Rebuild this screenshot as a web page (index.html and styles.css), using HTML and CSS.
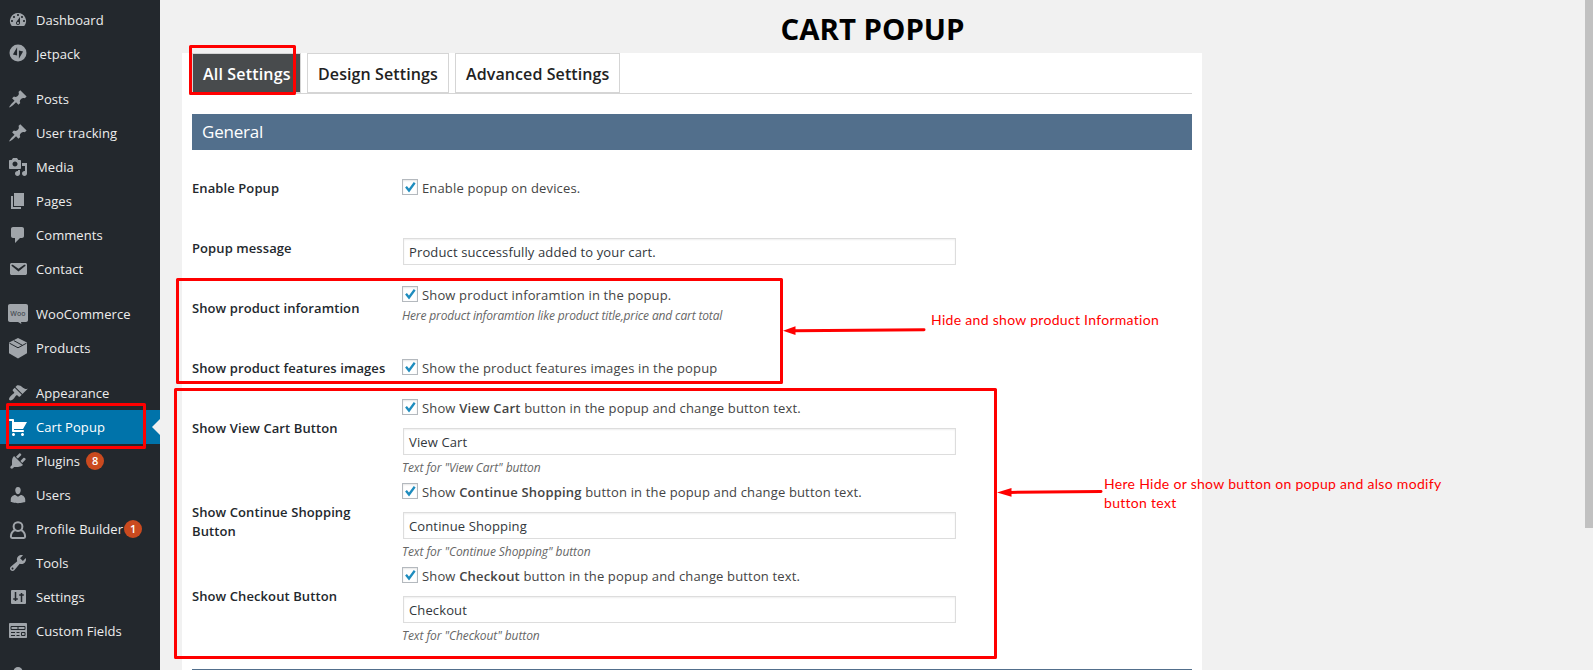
FILE: index.html
```html
<!DOCTYPE html>
<html lang="en">
<head>
<meta charset="utf-8">
<title>Cart Popup</title>
<link rel="stylesheet" href="styles.css">
</head>
<body>
<nav class="menu">
  <a class="item"><svg class="ico" viewBox="0 0 20 20"><path fill-rule="evenodd" d="M3.76 16h12.48A7.998 7.998 0 0 0 10 3a7.998 7.998 0 0 0-6.24 13zM10 4c.55 0 1 .45 1 1s-.45 1-1 1-1-.45-1-1 .45-1 1-1zM6 6c.55 0 1 .45 1 1s-.45 1-1 1-1-.45-1-1 .45-1 1-1zm8 0c.55 0 1 .45 1 1s-.45 1-1 1-1-.45-1-1 .45-1 1-1zm-5.37 5.55L12 7v6c0 1.1-.9 2-2 2s-2-.9-2-2c0-.57.24-1.08.63-1.45zM4 10c.55 0 1 .45 1 1s-.45 1-1 1-1-.45-1-1 .45-1 1-1zm12 0c.55 0 1 .45 1 1s-.45 1-1 1-1-.45-1-1 .45-1 1-1zm-5 3c0-.55-.45-1-1-1s-1 .45-1 1 .45 1 1 1 1-.45 1-1z"/></svg><span>Dashboard</span></a>
  <a class="item"><svg class="ico" viewBox="0 0 20 20"><circle cx="10" cy="9" r="8.5"/><path class="cut" d="M9.1 3.3v8.3L4.9 10.6zM10.9 14.7V6.4l4.2 1z"/></svg><span>Jetpack</span></a>
  <a class="item gap"><svg class="ico" viewBox="0 0 20 20"><path d="M10.44 3.02l1.82-1.82 6.36 6.35-1.83 1.82c-1.05-.68-2.48-.57-3.41.36l-.75.75c-.92.93-1.04 2.35-.35 3.41l-1.83 1.82-2.41-2.41-2.8 2.79c-.42.42-3.38 2.71-3.8 2.29s1.86-3.39 2.28-3.81l2.79-2.79L4.1 9.36l1.83-1.82c1.05.69 2.48.57 3.4-.36l.75-.75c.93-.92 1.05-2.35.36-3.41z"/></svg><span>Posts</span></a>
  <a class="item"><svg class="ico" viewBox="0 0 20 20"><path d="M10.44 3.02l1.82-1.82 6.36 6.35-1.83 1.82c-1.05-.68-2.48-.57-3.41.36l-.75.75c-.92.93-1.04 2.35-.35 3.41l-1.83 1.82-2.41-2.41-2.8 2.79c-.42.42-3.38 2.71-3.8 2.29s1.86-3.39 2.28-3.81l2.79-2.79L4.1 9.36l1.83-1.82c1.05.69 2.48.57 3.4-.36l.75-.75c.93-.92 1.05-2.35.36-3.41z"/></svg><span>User tracking</span></a>
  <a class="item"><svg class="ico" viewBox="0 0 20 20"><path fill-rule="evenodd" d="M13 11V4c0-.55-.45-1-1-1h-1.67L9 1H5L3.67 3H2c-.55 0-1 .45-1 1v7c0 .55.45 1 1 1h10c.55 0 1-.45 1-1zM7 4.5c1.38 0 2.5 1.12 2.5 2.5S8.38 9.5 7 9.5 4.5 8.38 4.5 7 5.62 4.5 7 4.5zM14 6h5v10.5c0 1.38-1.12 2.5-2.5 2.5S14 17.88 14 16.5s1.12-2.5 2.5-2.5c.17 0 .34.02.5.05V9h-3V6zm-4 8.05V13h2v3.5c0 1.38-1.12 2.5-2.5 2.5S7 17.88 7 16.5 8.12 14 9.5 14c.17 0 .34.02.5.05z"/></svg><span>Media</span></a>
  <a class="item"><svg class="ico" viewBox="0 0 20 20"><path d="M6 15V2h10v13H6zm-1 1h8v2H3V5h2v11z"/></svg><span>Pages</span></a>
  <a class="item"><svg class="ico" viewBox="0 0 20 20"><path d="M5 2h9c1.1 0 2 .9 2 2v7c0 1.1-.9 2-2 2h-2l-5 5v-5H5c-1.1 0-2-.9-2-2V4c0-1.1.9-2 2-2z"/></svg><span>Comments</span></a>
  <a class="item"><svg class="ico" viewBox="0 0 20 20"><path fill-rule="evenodd" d="M3.87 4h13.25C18.37 4 19 4.59 19 5.79v8.42c0 1.19-.63 1.79-1.88 1.79H3.87c-1.25 0-1.88-.6-1.88-1.79V5.79c0-1.2.63-1.79 1.88-1.79zm6.62 8.6l6.74-5.53c.24-.2.43-.66.13-1.07-.29-.41-.82-.42-1.17-.17l-5.7 3.86L4.8 5.83c-.35-.25-.88-.24-1.17.17-.3.41-.11.87.13 1.07z"/></svg><span>Contact</span></a>
  <a class="item gap"><svg class="ico" viewBox="0 0 20 20"><path d="M2 0h16c1.2 0 2 .8 2 2v14c0 1.2-.8 2-2 2h-5l.4 2-3.4-2H2c-1.2 0-2-.8-2-2V2C0 .8.8 0 2 0z"/><text class="woo" x="10" y="11.5">Woo</text></svg><span>WooCommerce</span></a>
  <a class="item"><svg class="ico" viewBox="0 0 20 20"><path d="M10 0l9 4.5v10.8L10 20.500l-9-5.200V4.500z"/><path class="line" d="M1.500 5.200L10 9.800l8.500-4.600M5.800 2.600l8.600 4.700"/></svg><span>Products</span></a>
  <a class="item gap"><svg class="ico" viewBox="0 0 20 20"><path d="M14.48 11.06L7.41 3.99l1.5-1.5c.5-.56 2.3-.47 3.51.32 1.21.8 1.43 1.28 2.91 2.1 1.18.64 2.45 1.26 4.45.85zm-.71.71L6.7 4.7 4.93 6.47c-.39.39-.39 1.02 0 1.41l1.06 1.06c.39.39.39 1.03 0 1.42-.6.6-1.43 1.11-2.21 1.69-.35.26-.7.53-1.01.84C1.43 14.23.4 16.08 1.4 17.07c.99 1 2.84-.03 4.18-1.36.31-.31.58-.66.85-1.02.57-.78 1.08-1.61 1.69-2.21.39-.39 1.02-.39 1.41 0l1.06 1.06c.39.39 1.02.39 1.41 0z"/></svg><span>Appearance</span></a>
  <a class="item current"><svg class="ico" viewBox="0 0 20 20"><path d="M6 13h9c.55 0 1 .45 1 1s-.45 1-1 1H5c-.55 0-1-.45-1-1V4H2c-.55 0-1-.45-1-1s.45-1 1-1h3c.55 0 1 .45 1 1v2h13l-4 7H6v1zm-.5 3c.83 0 1.5.67 1.5 1.5S6.33 19 5.5 19 4 18.33 4 17.5 4.67 16 5.5 16zm9 0c.83 0 1.5.67 1.5 1.5s-.67 1.5-1.5 1.5-1.5-.67-1.5-1.5.67-1.5 1.5-1.5z"/></svg><span>Cart Popup</span></a>
  <a class="item"><svg class="ico" viewBox="0 0 20 20"><path d="M13.11 4.36L9.87 7.6 8 5.73l3.24-3.24c.35-.34 1.05-.2 1.56.32.52.51.66 1.21.31 1.55zm-8 1.77l.91-1.12 9.01 9.01-1.19.84c-.71.71-2.63 1.16-3.82 1.16H6.14L4.9 17.26c-.59.59-1.54.59-2.12 0-.59-.58-.59-1.53 0-2.12l1.24-1.24v-3.88c0-1.13.4-3.19 1.09-3.89zm7.26 3.97l3.24-3.24c.34-.35 1.04-.21 1.55.31.52.51.66 1.21.31 1.55l-3.24 3.25z"/></svg><span>Plugins</span><b class="count">8</b></a>
  <a class="item"><svg class="ico" viewBox="0 0 20 20"><path d="M10 9.25c-2.27 0-2.73-3.44-2.73-3.44C7 4.02 7.82 2 9.97 2c2.16 0 2.98 2.02 2.71 3.81 0 0-.41 3.44-2.68 3.44zm0 2.57L12.72 10c2.39 0 4.52 2.33 4.52 4.53v2.49s-3.65 1.13-7.24 1.13c-3.65 0-7.24-1.13-7.24-1.13v-2.49c0-2.25 1.94-4.48 4.47-4.48z"/></svg><span>Users</span></a>
  <a class="item"><svg class="ico" viewBox="0 0 20 20"><path class="stroke" d="M10 3.200c2.700 0 4.400 1.900 4.400 4.300S12.700 12 10 12 5.600 9.900 5.600 7.500 7.300 3.200 10 3.200zM6.800 11.200C4 12.600 2.900 15 2.900 17.600c0 .9.300 1.300 1.200 1.300h11.800c.9 0 1.200-.4 1.200-1.300 0-2.600-1.100-5-3.900-6.400"/></svg><span>Profile Builder</span><b class="count tight">1</b></a>
  <a class="item"><svg class="ico" viewBox="0 0 20 20"><path fill-rule="evenodd" d="M16.68 9.77c-1.34 1.34-3.3 1.67-4.95.99l-5.41 6.52c-.99.99-2.59.99-3.58 0s-.99-2.59 0-3.57l6.52-5.42c-.68-1.65-.35-3.61.99-4.95 1.28-1.28 3.12-1.62 4.72-1.06l-2.89 2.89 2.82 2.82 2.86-2.87c.53 1.58.18 3.39-1.08 4.65zM3.81 16.21c.4.39 1.04.39 1.43 0 .4-.4.4-1.04 0-1.43-.39-.4-1.03-.4-1.43 0-.39.39-.39 1.03 0 1.43z"/></svg><span>Tools</span></a>
  <a class="item"><svg class="ico" viewBox="0 0 20 20"><rect x="3" y="3" width="15" height="14" rx="1"/><path class="line thick" d="M7.500 5v9M5.200 12h4.600M13.500 6v9M11.200 8h4.600"/></svg><span>Settings</span></a>
  <a class="item"><svg class="ico" viewBox="0 0 20 20"><rect x="1" y="2" width="18" height="15" rx=".8"/><path class="line" d="M3 5.500h14v3H3zM3 11.500h4M3 14.500h4M8.500 11.500h3M8.500 14.500h3M13.500 11.500H17v3h-3.500zM10 5.500v3"/></svg><span>Custom Fields</span></a>
  <a class="item gap"><svg class="ico" viewBox="0 0 20 20"><circle cx="10" cy="5.500" r="4.500"/></svg></a>
</nav>

<main class="main">
  <h1 class="title">CART POPUP</h1>
  <section class="panel">
    <div class="tabs">
      <a class="tab active">All Settings</a>
      <a class="tab design">Design Settings</a>
      <a class="tab advanced">Advanced Settings</a>
    </div>
    <h2 class="bar">General</h2>
    <div class="row mid">
      <label class="name">Enable Popup</label>
      <div class="field"><div class="check"><i class="box"><svg viewBox="0 0 14 14"><path d="M3 6.800l3 3.700L11.700 2.800"/></svg></i><span>Enable popup on devices.</span></div></div>
    </div>
    <div class="row text">
      <label class="name">Popup message</label>
      <div class="field"><div class="input">Product successfully added to your cart.</div></div>
    </div>
    <div class="row info">
      <label class="name">Show product inforamtion</label>
      <div class="field"><div class="check"><i class="box"><svg viewBox="0 0 14 14"><path d="M3 6.800l3 3.700L11.700 2.800"/></svg></i><span>Show product inforamtion in the popup.</span></div>
      <p class="desc">Here product inforamtion like product title,price and cart total</p></div>
    </div>
    <div class="row mid">
      <label class="name">Show product features images</label>
      <div class="field"><div class="check"><i class="box"><svg viewBox="0 0 14 14"><path d="M3 6.800l3 3.700L11.700 2.800"/></svg></i><span>Show the product features images in the popup</span></div></div>
    </div>
    <div class="row tall">
      <label class="name">Show View Cart Button</label>
      <div class="field"><div class="check"><i class="box"><svg viewBox="0 0 14 14"><path d="M3 6.800l3 3.700L11.700 2.800"/></svg></i><span>Show <b>View Cart</b> button in the popup and change button text.</span></div>
      <div class="input">View Cart</div><p class="desc">Text for "View Cart" button</p></div>
    </div>
    <div class="row tall">
      <label class="name">Show Continue Shopping Button</label>
      <div class="field"><div class="check"><i class="box"><svg viewBox="0 0 14 14"><path d="M3 6.800l3 3.700L11.700 2.800"/></svg></i><span>Show <b>Continue Shopping</b> button in the popup and change button text.</span></div>
      <div class="input">Continue Shopping</div><p class="desc">Text for "Continue Shopping" button</p></div>
    </div>
    <div class="row tall last">
      <label class="name">Show Checkout Button</label>
      <div class="field"><div class="check"><i class="box"><svg viewBox="0 0 14 14"><path d="M3 6.800l3 3.700L11.700 2.800"/></svg></i><span>Show <b>Checkout</b> button in the popup and change button text.</span></div>
      <div class="input">Checkout</div><p class="desc">Text for "Checkout" button</p></div>
    </div>
    <h2 class="bar"></h2>
  </section>
</main>

<i class="scroll"></i>
<i class="mark mark-tab"></i>
<i class="mark mark-menu"></i>
<i class="mark mark-info"></i>
<i class="mark mark-buttons"></i>
<svg class="arrows" viewBox="0 0 1593 670"><path class="shaft" d="M794 330.700L924 329.700M1010 492.400L1101 491.600"/><path d="M783 330.700l12.500-4.400v8.600zM997 492.500l14.500-4.600v8.800z"/></svg>
<p class="note note-info">Hide and show product Information</p>
<p class="note note-buttons">Here Hide or show button on popup and also modify<br>button text</p>
</body>
</html>
```
FILE: styles.css
```css
* { box-sizing: border-box; }
body {
  margin: 0;
  width: 1593px;
  height: 670px;
  overflow: hidden;
  display: flex;
  position: relative;
  background: #f1f1f1;
  font-family: "Open Sans", "Noto Sans", sans-serif;
  font-size: 13px;
  color: #444;
}
h1, h2, p { margin: 0; }

.menu { width: 160px; height: 670px; flex: none; background: #23282d; padding-top: 3px; overflow: hidden; }
.item { height: 34px; display: flex; align-items: center; padding-left: 8px; color: #eee; white-space: nowrap; position: relative; letter-spacing: .07px; }
.item.gap { margin-top: 11px; }
.ico { width: 20px; height: 20px; flex: none; margin-right: 8px; fill: #a0a5aa; overflow: visible; }
.ico .cut { fill: #23282d; }
.ico .line { fill: none; stroke: #23282d; stroke-width: 1; }
.ico .thick { stroke-width: 1.5; }
.ico .stroke { fill: none; stroke: #a0a5aa; stroke-width: 2; }
.woo { fill: #4a5056; font: 600 7px "Open Sans", sans-serif; text-anchor: middle; }
.current { background: #0073aa; color: #fff; }
.current .ico { fill: #fff; }
.current::after { content: ""; position: absolute; right: 0; top: 9px; border: 8px solid transparent; border-left: 0; border-right-color: #f1f1f1; }
.count { width: 18px; height: 18px; margin-left: 6px; border-radius: 9px; background: #ca4a1f; color: #fff; font-size: 11px; font-weight: 600; line-height: 18px; text-align: center; }
.count.tight { margin-left: 1px; }

.main { width: 1381px; margin-left: 22px; flex: none; }
.title { height: 53px; padding-top: 9px; line-height: 41px; font-size: 29.4px; font-weight: 700; color: #000; text-align: center; }
.panel { width: 1020px; height: 617px; background: #fff; padding: 0 10px; overflow: hidden; }
.tabs { display: flex; gap: 6px; height: 41px; border-bottom: 1px solid #d5d5d5; }
.tab { height: 40px; border: 1px solid #d5d5d5; padding: 0 10px; line-height: 40px; font-size: 16px; font-weight: 600; letter-spacing: .1px; color: #222; white-space: nowrap; width: 109px; }
.tab.design { width: 142px; }
.tab.advanced { width: 165px; }
.tab.active { background: #484b4d; color: #fff; letter-spacing: .17px; }
.bar { margin: 20px 0 8px; height: 36px; padding-left: 10px; background: #526f8c; color: #fff; font-size: 17px; font-weight: 400; letter-spacing: -.2px; line-height: 35px; }

.row { display: grid; grid-template-columns: 210px 1fr; height: 60px; }
.row.tall { height: 84px; }
.row.last { height: 83px; }
.name { padding: 21px 12px 0 0; line-height: 19px; font-weight: 600; letter-spacing: .09px; color: #23282d; }
.mid .field { padding-top: 21px; }
.text .field { padding-top: 20px; }
.info .field { padding-top: 8px; }
.tall .field { padding-top: 1px; }
.check { display: flex; gap: 4px; height: 16px; line-height: 18px; white-space: nowrap; letter-spacing: .15px; }
.check b { font-weight: 600; letter-spacing: .2px; }
.box { width: 16px; height: 16px; border: 1px solid #b4b9be; background: #fff; box-shadow: inset 0 1px 2px rgba(0, 0, 0, .1); flex: none; }
.box svg { display: block; width: 14px; height: 14px; fill: none; stroke: #1e8cbe; stroke-width: 2.3; }
.input { width: 553px; height: 27px; margin-left: 1px; border: 1px solid #ddd; box-shadow: inset 0 1px 2px rgba(0, 0, 0, .07); padding-left: 5px; line-height: 26px; letter-spacing: .13px; color: #32373c; }
.tall .input { margin-top: 13px; }
.desc { font-size: 12px; font-style: italic; line-height: 18px; letter-spacing: -.08px; color: #666; margin-top: 4px; white-space: nowrap; }
.info .desc { margin-top: 5px; letter-spacing: -.14px; }

.scroll { position: absolute; right: 0; top: 0; width: 8px; height: 528px; background: #c1c1c1; }
.mark { position: absolute; border: 3px solid #f00; border-radius: 1.5px; }
.mark-tab { left: 189px; top: 45px; width: 107px; height: 50px; }
.mark-menu { left: 6px; top: 403px; width: 140px; height: 46px; }
.mark-info { left: 176px; top: 278px; width: 607px; height: 106px; }
.mark-buttons { left: 174px; top: 388px; width: 823px; height: 271px; }
.arrows { position: absolute; left: 0; top: 0; width: 1593px; height: 670px; fill: #f00; pointer-events: none; }
.shaft { stroke: #f00; stroke-width: 3; stroke-linecap: round; }
.note { position: absolute; font-family: Lato, "Open Sans", sans-serif; font-size: 14px; line-height: 19px; letter-spacing: .3px; font-variant-ligatures: common-ligatures; color: #f00; white-space: nowrap; }
.note-info { left: 931px; top: 310px; }
.note-buttons { left: 1104px; top: 474px; }
```
